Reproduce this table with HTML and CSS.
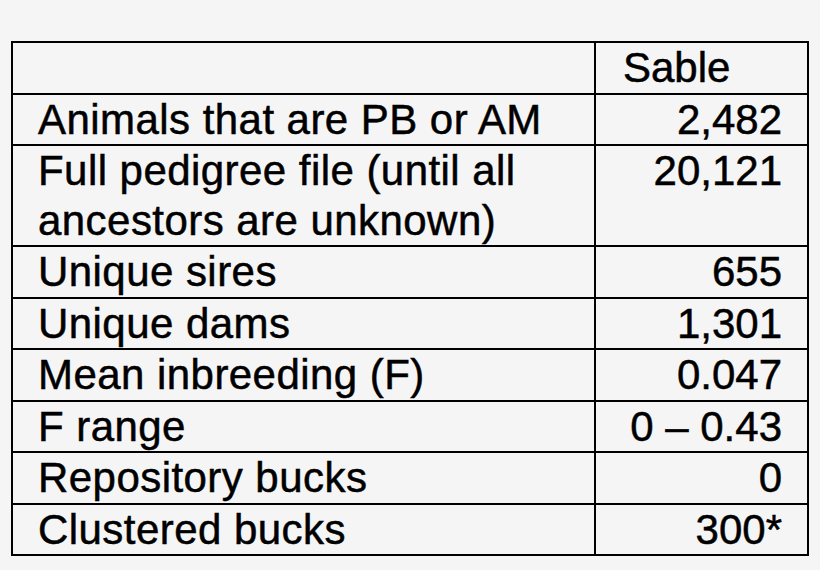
FILE: index.html
```html
<!DOCTYPE html>
<html>
<head>
<meta charset="utf-8">
<link rel="stylesheet" href="styles.css">
</head>
<body>
<div class="page">
<table class="stats">
  <thead>
    <tr><th class="label"></th><th class="value head">Sable</th></tr>
  </thead>
  <tbody>
    <tr><td class="label">Animals that are PB or AM</td><td class="value">2,482</td></tr>
    <tr><td class="label">Full pedigree file (until all<br>ancestors are unknown)</td><td class="value">20,121</td></tr>
    <tr><td class="label">Unique sires</td><td class="value">655</td></tr>
    <tr><td class="label">Unique dams</td><td class="value">1,301</td></tr>
    <tr><td class="label">Mean inbreeding (F)</td><td class="value">0.047</td></tr>
    <tr><td class="label">F range</td><td class="value">0 – 0.43</td></tr>
    <tr><td class="label">Repository bucks</td><td class="value">0</td></tr>
    <tr><td class="label">Clustered bucks</td><td class="value">300*</td></tr>
  </tbody>
</table>
</div>
</body>
</html>
```
FILE: styles.css
```css
html, body {
  margin: 0;
  padding: 0;
  background: #f5f5f5;
}
.page {
  padding: 41px 0 0 11px;
}
.stats {
  border-collapse: collapse;
  width: 798px;
  font-family: "Liberation Sans", Arial, sans-serif;
  font-size: 42px;
  line-height: 49.5px;
  color: #000;
  -webkit-text-stroke: 0.5px #000;
}
.stats th, .stats td {
  border: 2px solid #000;
  padding: 0;
  vertical-align: top;
  font-weight: normal;
}
.label {
  width: 556px;
  text-align: left;
  padding-left: 25px !important;
  letter-spacing: 0.45px;
}
.value {
  text-align: right;
  padding-right: 25px !important;
}
.value.head {
  text-align: left;
  padding-left: 27px !important;
}
```
